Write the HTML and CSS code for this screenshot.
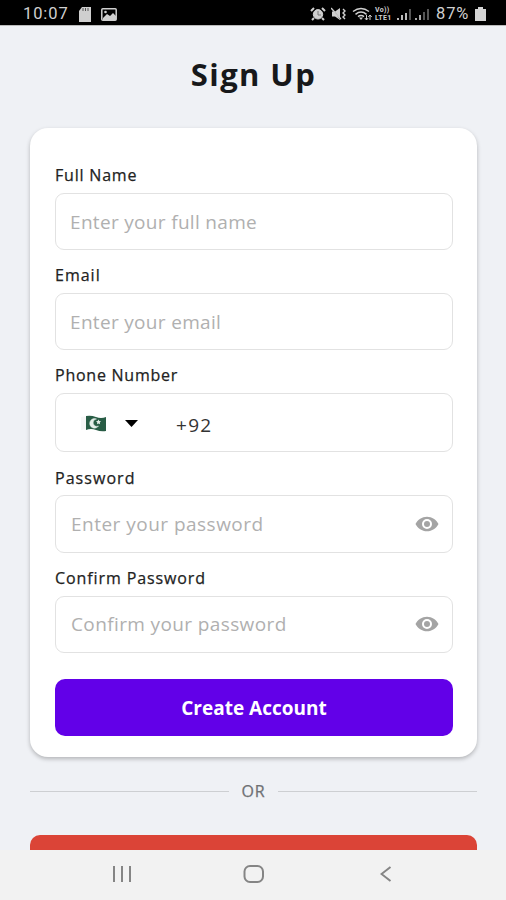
FILE: index.html
```html
<!DOCTYPE html>
<html lang="en">
<head>
<meta charset="utf-8">
<title>Sign Up</title>
<link rel="stylesheet" href="styles.css">
</head>
<body>
<header class="status">
  <span class="clock">10:07</span>
  <svg class="sd" width="12" height="15" viewBox="0 0 12 15"><path d="M3 0h9v15H0V4z" fill="#cfcfcf"/><path d="M4 1v3M6.5 1v3M9 1v3" stroke="#555"/></svg>
  <svg class="pic" width="16" height="13" viewBox="0 0 16 13"><rect x=".8" y=".8" width="14.4" height="11.4" rx="1" fill="none" stroke="#cfcfcf" stroke-width="1.5"/><path d="M2 10l4-4 3 2 3-3 3 3v4H2z" fill="#cfcfcf"/><circle cx="4.5" cy="4" r="1.3" fill="#cfcfcf"/></svg>
  <div class="signals">
    <svg width="16" height="14" viewBox="0 0 16 14" fill="none" stroke="#cfcfcf"><circle cx="8" cy="7.3" r="4.7" fill="#cfcfcf"/><path d="M1 4l3-3M12 1l3 3M4 11l-2 2M12 11l2 2" stroke-width="2"/><path d="M8 4v4h3" stroke="#777" stroke-width="1"/></svg>
    <svg class="mute" width="16" height="14" viewBox="0 0 16 14" fill="none" stroke="#cfcfcf"><path d="M1 4.5h3L9 1v12L4 9.5H1z" fill="#cfcfcf" stroke="none"/><path d="M1 1l9 12" stroke="#222"/><path d="M0 1l10 11" stroke-width="1.2"/><path d="M12 2l2 2-2 2 2 2-2 2 2 2" stroke-width="1.4"/></svg>
    <svg class="wifi" width="21" height="14" viewBox="0 0 21 14" fill="none" stroke="#cfcfcf" stroke-width="1.5"><path d="M1 4.5q8-6 16 0M3.5 7.3q5.5-4.5 11 0M6 9.7q3-2.5 6 0"/><path d="M7 10.5h4L9 13z" fill="#cfcfcf" stroke="none"/><path d="M14.5 8v5M12.8 11l1.7 2 1.7-2M18 13V8M16.3 10L18 8l1.7 2" stroke-width="1"/></svg>
    <span class="volte"><b>Vo))</b><b>LTE1</b></span>
    <svg class="bars" width="15" height="12" viewBox="0 0 15 12"><path d="M0 10h2v2H0zM4 7h2v5H4zM8 5h2v7H8z" fill="#bbb"/><path d="M12 1h2v11h-2z" fill="#555"/></svg>
    <svg class="bars second" width="15" height="12" viewBox="0 0 15 12"><path d="M0 10h2v2H0zM4 7h2v5H4z" fill="#aaa"/><path d="M8 4h2v8H8zM12 1h2v11h-2z" fill="#555"/></svg>
    <span class="percent">87%</span>
    <svg width="11" height="14" viewBox="0 0 11 14"><path d="M3 0h5v2h3v12H0V2h3z" fill="#d4d4d4"/></svg>
  </div>
</header>
<main class="page">
  <h1 class="title"><span>Sign Up</span></h1>
  <form class="card">
    <div class="field"><label class="label l-name">Full Name</label><div class="input"><span class="hint h-name">Enter your full name</span></div></div>
    <div class="field"><label class="label l-email">Email</label><div class="input"><span class="hint h-email">Enter your email</span></div></div>
    <div class="field"><label class="label l-phone">Phone Number</label><div class="input phone">
      <svg class="flag" width="27" height="20" viewBox="0 0 27 20"><path d="M1 3q3-1 6 0v13q-3-1-6 0z" fill="#f6f6f6"/><path d="M6 2q5-1 10 1t10 0v14q-5 1-10-1t-10 0z" fill="#285c45"/><path d="M16.500 5a4.800 4.800 0 1 0 2 7A3.700 3.700 0 1 1 16.500 5z" fill="#e6eeea" stroke="#e6eeea" stroke-width=".5"/><path d="M18.5 5.500l.8 1.6 1.7.2-1.2 1.2.3 1.7-1.6-.8-1.5.8.3-1.7L16 7.300l1.7-.2z" fill="#e6eeea"/></svg>
      <svg class="caret" width="13" height="7" viewBox="0 0 13 7"><path d="M0 0h13L6.5 7z" fill="#000"/></svg>
      <span class="code">+92</span>
    </div></div>
    <div class="field"><label class="label l-pass">Password</label><div class="input secret"><span class="hint h-pass">Enter your password</span>
      <svg class="eye" width="24" height="16" viewBox="0 0 24 16"><path fill-rule="evenodd" d="M12 .7C7 .7 2.700 3.700.5 8 2.700 12.300 7 15.300 12 15.300S21.300 12.300 23.500 8C21.300 3.700 17 .7 12 .7zM12 3a5 5 0 1 1 0 10 5 5 0 0 1 0-10z" fill="#a4a4a4"/><circle cx="12" cy="8" r="3" fill="#a4a4a4"/></svg></div></div>
    <div class="field"><label class="label l-confirm">Confirm Password</label><div class="input secret"><span class="hint h-confirm">Confirm your password</span>
      <svg class="eye" width="24" height="16" viewBox="0 0 24 16"><path fill-rule="evenodd" d="M12 .7C7 .7 2.700 3.700.5 8 2.700 12.300 7 15.300 12 15.300S21.300 12.300 23.500 8C21.300 3.700 17 .7 12 .7zM12 3a5 5 0 1 1 0 10 5 5 0 0 1 0-10z" fill="#a4a4a4"/><circle cx="12" cy="8" r="3" fill="#a4a4a4"/></svg></div></div>
    <button class="submit" type="button">Create Account</button>
  </form>
  <div class="divider"><span>OR</span></div>
  <div class="social"></div>
</main>
<nav class="nav">
  <svg width="20" height="16" viewBox="0 0 20 16" stroke="#858585" stroke-width="2"><path d="M2 0v16M10 0v16M18 0v16"/></svg>
  <svg class="home" width="22" height="18" viewBox="0 0 22 18" fill="none" stroke="#858585" stroke-width="2"><rect x="1.500" y="1" width="18.500" height="16" rx="5.500"/></svg>
  <svg width="12" height="16" viewBox="0 0 12 16" fill="none" stroke="#858585" stroke-width="2"><path d="M10.500 1L1.500 8l9 7"/></svg>
</nav>
</body>
</html>
```
FILE: styles.css
```css
* { box-sizing: border-box; }
body {
  margin: 0;
  width: 506px;
  height: 900px;
  overflow: hidden;
  display: flex;
  flex-direction: column;
  background: #eff1f5;
  font-family: "Open Sans", "Noto Sans", sans-serif;
}
svg { display: block; flex: none; }
.status {
  height: 26px;
  flex: none;
  background: #000;
  border-bottom: 1px solid #bbb;
  display: flex;
  align-items: center;
  padding: 3px 20px 0 23px;
  color: #d0d0d0;
  font-family: Roboto, sans-serif;
  font-size: 16.5px;
  line-height: 20px;
}
.clock { width: 56px; letter-spacing: .9px; }
.pic { margin-left: 10px; }
.signals { margin-left: auto; display: flex; align-items: center; }
.mute { margin-left: 5px; }
.wifi { margin-left: 5px; }
.volte {
  width: 19px;
  margin-left: 2px;
  font-size: 7px;
  line-height: 8px;
  letter-spacing: .3px;
  display: flex;
  flex-direction: column;
}
.bars { margin-left: 3px; }
.second { margin-left: 3px; }
.percent { width: 39px; margin-left: 6px; letter-spacing: .9px; }
.page { flex: 1; min-height: 0; overflow: hidden; padding: 0 29px 0 30px; }
.title {
  margin: 0;
  height: 102px;
  padding-top: 26px;
  font-size: 31px;
  line-height: 44px;
  font-weight: 700;
  letter-spacing: 1.4px;
  text-align: center;
  color: #17181a;
}
.card {
  height: 629px;
  padding: 37px 24px 0 25px;
  border-radius: 18px;
  background: #fff;
  box-shadow: 0 2px 4px rgba(0, 0, 0, .25);
}
.field { margin-bottom: 15.400px; }
.label {
  display: block;
  height: 20px;
  margin-bottom: 7.600px;
  font-size: 16px;
  line-height: 20px;
  font-weight: 500;
  color: #222;
  white-space: nowrap;
  -webkit-text-stroke: .25px #222;
}
.l-name { letter-spacing: .8px; }
.l-email { letter-spacing: 1px; }
.l-phone { letter-spacing: .75px; }
.l-pass { letter-spacing: 1.050px; }
.l-confirm { letter-spacing: .9px; }
.input {
  height: 57.200px;
  border: 1px solid #e2e2e2;
  border-radius: 9px;
  display: flex;
  align-items: center;
  padding: 2px 13px 0 14px;
  font-size: 19px;
  line-height: 28px;
}
.secret { padding: 0 13px 0 15px; }
.hint { color: #b0b0b0; white-space: nowrap; }
.h-name, .h-email { letter-spacing: .320px; }
.h-pass { letter-spacing: .480px; }
.h-confirm { letter-spacing: .380px; }
.phone { height: 59.500px; }
.flag { margin-left: 10px; }
.caret { margin-left: 18px; }
.code { margin-left: 38px; padding-top: 3px; color: #333; letter-spacing: 1.300px; }
.eye { margin-left: auto; }
.submit {
  display: block;
  width: 100%;
  height: 57px;
  margin-top: 26px;
  padding: 2px 0 0;
  border: 0;
  border-radius: 10px;
  background: #6200e8;
  color: #fff;
  font: 700 19px/28px "Open Sans", sans-serif;
}
.divider {
  height: 20px;
  margin-top: 24px;
  display: flex;
  align-items: center;
  gap: 12px;
  font-size: 16px;
  font-weight: 500;
  line-height: 20px;
  letter-spacing: .9px;
  color: #6e7074;
  -webkit-text-stroke: .25px #6e7074;
}
.divider::before, .divider::after { content: ""; flex: 1; height: 1px; background: #cdcfd2; }
.social { height: 57px; margin-top: 34px; border-radius: 10px; background: #db4437; }
.nav {
  height: 50px;
  flex: none;
  background: #f2f2f2;
  display: flex;
  justify-content: space-between;
  align-items: center;
  padding: 0 114px 2px 112px;
}
.home { margin-right: 5px; }
```
